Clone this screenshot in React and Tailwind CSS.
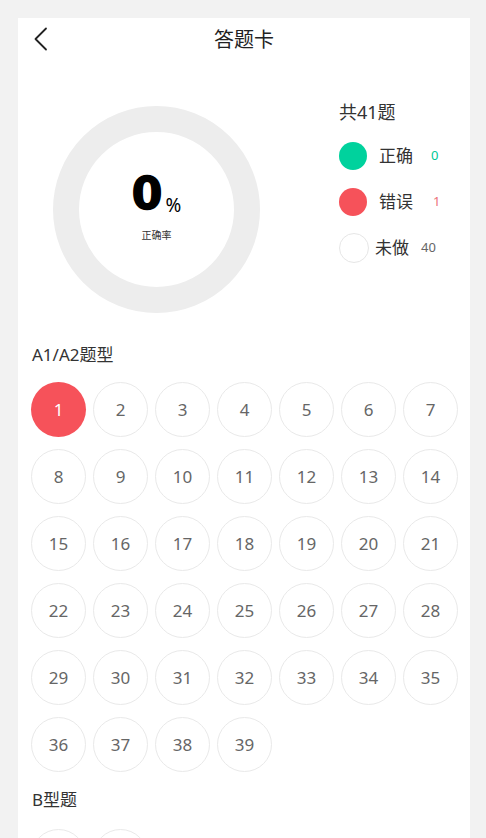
import React from "react";

const Circle = ({ n, active }) => (
  <div
    className={
      active
        ? "w-[55px] h-[55px] rounded-full bg-[#f6525a] text-white flex items-center justify-center text-[17px]"
        : "w-[55px] h-[55px] rounded-full border border-[#e9e9e9] text-[#666666] flex items-center justify-center text-[17px]"
    }
  >
    {n}
  </div>
);

export default function App() {
  const nums = Array.from({ length: 39 }, (_, i) => i + 1);
  return (
    <div
      className="min-h-[838px] h-[838px] overflow-hidden bg-[#f2f2f2] pt-[18px] pl-[18px]"
      style={{ fontFamily: '"Noto Sans", "Noto Sans CJK SC", sans-serif' }}
    >
      <div className="bg-white h-[900px] w-[452px]">
        {/* header */}
        <div className="relative h-[44px] flex items-center justify-center">
          <svg
            className="absolute left-[15px] top-[9px]"
            width="16"
            height="24"
            viewBox="0 0 16 24"
            fill="none"
          >
            <polyline points="13,1.5 2.5,12 13,22.5" stroke="#222" strokeWidth="1.8" strokeLinecap="round" strokeLinejoin="round" />
          </svg>
          <span className="text-[20px] text-[#222] leading-none">答题卡</span>
        </div>

        {/* stats */}
        <div className="flex items-start pl-[35px] mt-[37px]">
          <div className="mt-[7px] w-[207px] h-[207px] rounded-full border-[26px] border-[#ededed] flex flex-col items-center justify-center">
            <div className="flex items-end mt-[-8px]">
              <span className="text-[44px] font-bold leading-none text-black [-webkit-text-stroke:1.5px_#000]" style={{ fontFamily: '"DejaVu Sans", sans-serif' }}>0</span>
              <span className="text-[19px] leading-none text-black mb-[1px] ml-[3px]">%</span>
            </div>
            <span className="text-[10px] text-[#333] mt-[14px] leading-none">正确率</span>
          </div>
          <div className="ml-[79px] flex flex-col">
            <div className="h-[26px] flex items-center text-[18px] text-[#333]">共41题</div>
            <div className="mt-[8px] h-[46px] flex items-center">
              <div className="w-[28px] h-[28px] rounded-full bg-[#00d29d]" />
              <span className="ml-[12px] text-[17px] text-[#333]">正确</span>
              <span className="ml-[18px] text-[13px] text-[#00c896]">0</span>
            </div>
            <div className="h-[46px] flex items-center">
              <div className="w-[28px] h-[28px] rounded-full bg-[#f6525a]" />
              <span className="ml-[12px] text-[17px] text-[#333]">错误</span>
              <span className="ml-[20px] text-[13px] text-[#ec7078]">1</span>
            </div>
            <div className="h-[46px] flex items-center">
              <div className="w-[30px] h-[30px] rounded-full border border-[#e6e6e6]" />
              <span className="ml-[6px] text-[17px] text-[#333]">未做</span>
              <span className="ml-[12px] text-[13px] text-[#666]">40</span>
            </div>
          </div>
        </div>

        {/* A1/A2 */}
        <div className="px-[13px]">
          <div className="mt-[30px] h-[24px] flex items-center text-[17px] text-[#333] pl-[1px]">A1/A2题型</div>
          <div className="mt-[15px] grid grid-cols-[repeat(7,55px)] gap-x-[7px] gap-y-[12px]">
            {nums.map((n) => (
              <Circle key={n} n={n} active={n === 1} />
            ))}
          </div>
          <div className="mt-[16px] h-[24px] flex items-center text-[17px] text-[#333] pl-[1px]">B型题</div>
          <div className="mt-[17px] grid grid-cols-[repeat(7,55px)] gap-x-[7px] gap-y-[12px]">
            <Circle n={40} />
            <Circle n={41} />
          </div>
        </div>
      </div>
    </div>
  );
}
